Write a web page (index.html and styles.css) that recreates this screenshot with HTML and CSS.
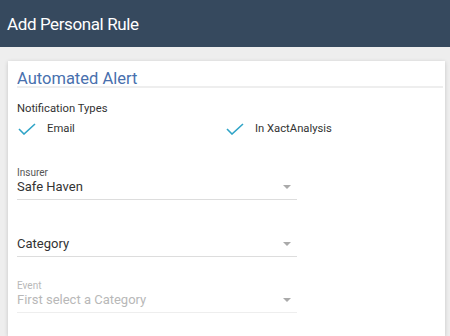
FILE: index.html
```html
<!DOCTYPE html>
<html lang="en">
<head>
    <meta charset="UTF-8">
    <title>Add Personal Rule</title>
    <link rel="stylesheet" href="styles.css">
</head>
<body>
    <div class="header">Add Personal Rule</div>

    <div class="card">
        <h2 class="card-title">Automated Alert</h2>

        <div class="section-label">Notification Types</div>
        <div class="checks">
            <div class="check">
                <svg class="tick" width="18" height="12" viewBox="0 0 18 12"><path d="M1 6 L6 11 L17 1" fill="none" stroke="#2fa4c7" stroke-width="1.6"/></svg>
                <span>Email</span>
            </div>
            <div class="check">
                <svg class="tick" width="18" height="12" viewBox="0 0 18 12"><path d="M1 6 L6 11 L17 1" fill="none" stroke="#2fa4c7" stroke-width="1.6"/></svg>
                <span>In XactAnalysis</span>
            </div>
        </div>

        <div class="field insurer">
            <div class="field-label">Insurer</div>
            <div class="field-value">Safe Haven<span class="caret"></span></div>
        </div>

        <div class="field category">
            <div class="field-value">Category<span class="caret"></span></div>
        </div>

        <div class="field event disabled">
            <div class="field-label">Event</div>
            <div class="field-value">First select a Category<span class="caret"></span></div>
        </div>
    </div>
</body>
</html>
```

FILE: styles.css
```css
body {
    margin: 0;
    background: #eeeeee;
    font-family: Roboto, "Liberation Sans", sans-serif;
    color: #333;
    overflow: hidden;
}
.header {
    background: #36495e;
    color: white;
    height: 47px;
    line-height: 48px;
    padding-left: 7px;
    font-size: 17px;
    letter-spacing: -0.4px;
}
.card {
    background: white;
    margin: 14px 5px 0 8px;
    padding: 10px 2px 0 9px;
    box-shadow: 0 1px 4px rgba(0,0,0,0.18);
    height: 265px;
}
.card-title {
    margin: 0;
    font-weight: 400;
    font-size: 16.5px;
    color: #4870ae;
    line-height: 15px;
    border-bottom: 2px solid #eeeeee;
}
.section-label {
    font-size: 11.25px;
    margin-top: 13px;
    line-height: 16px;
}
.checks {
    display: flex;
    margin-top: 4px;
}
.check {
    display: flex;
    align-items: center;
    width: 208px;
    font-size: 11.25px;
    line-height: 16px;
}
.tick {
    margin-left: 1px;
    margin-right: 11px;
}
.field {
    width: 280px;
    border-bottom: 1px solid #dddddd;
}
.insurer {
    margin-top: 30px;
}
.category {
    margin-top: 36px;
}
.event {
    margin-top: 23px;
    border-bottom-color: #eeeeee;
}
.field-label {
    font-size: 10px;
    line-height: 12px;
    color: #555;
}
.field-value {
    position: relative;
    font-size: 13px;
    line-height: 16px;
    padding-bottom: 4px;
}
.caret {
    position: absolute;
    right: 6px;
    top: 6px;
    width: 0;
    height: 0;
    border-left: 4px solid transparent;
    border-right: 4px solid transparent;
    border-top: 4px solid #aaa;
}
.disabled .field-label,
.disabled .field-value {
    color: #b8b8b8;
}
```
